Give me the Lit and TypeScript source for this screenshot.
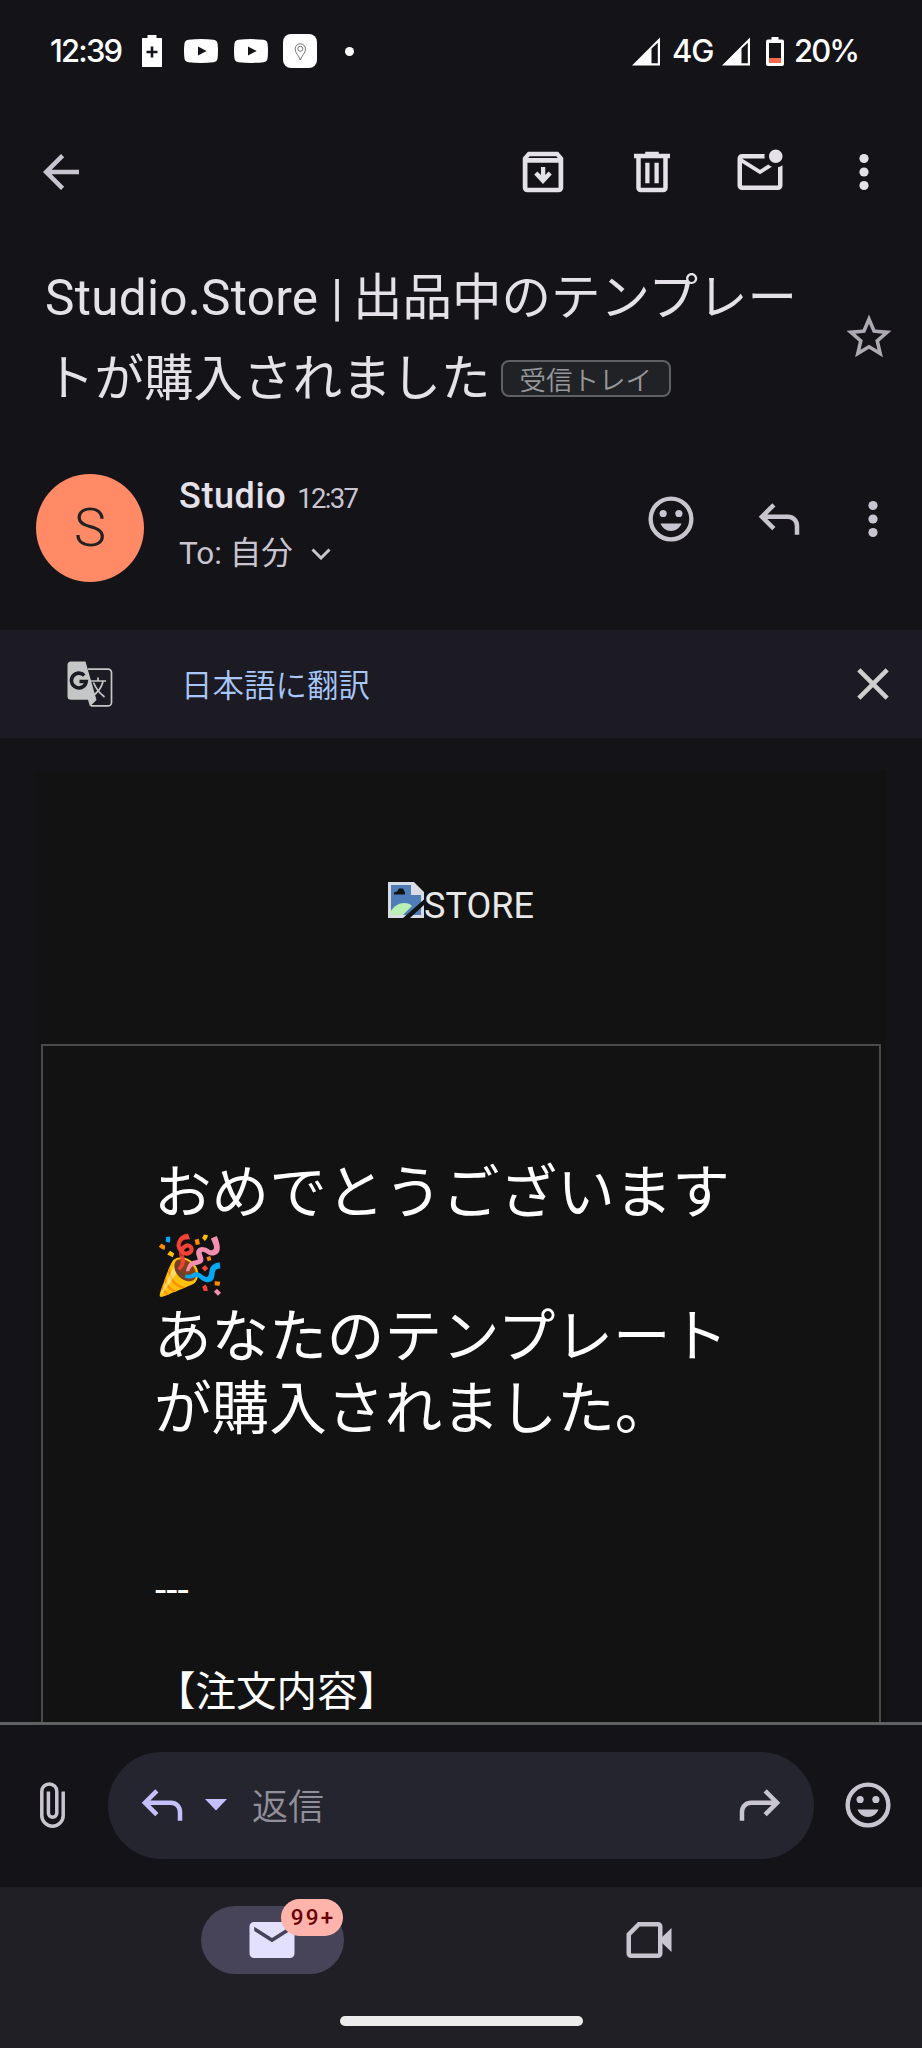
import { LitElement, html, css, svg } from "lit";
import { customElement } from "lit/decorators.js";

const smile = svg`
  <circle cx="12" cy="12" r="9.05" fill="none" stroke="currentColor" stroke-width="1.95"/>
  <circle cx="8.5" cy="9.55" r="1.6"/><circle cx="15.5" cy="9.55" r="1.6"/>
  <path d="M7.3 14h9.4c-.8 2-2.6 3.3-4.7 3.3s-3.9-1.3-4.7-3.3z"/>`;
const dots = svg`<circle cx="12" cy="6" r="2.05"/><circle cx="12" cy="12" r="2.05"/><circle cx="12" cy="18" r="2.05"/>`;
const reply = svg`<path d="M19 19v-4q0-1.25-.875-2.125T16 12H6.825l3.6 3.6L9 17l-6-6 6-6 1.425 1.4-3.6 3.6H16q2.075 0 3.538 1.463T21 15v4z"/>`;

const icon = (body: unknown, cls = "") =>
  html`<svg class="icon ${cls}" viewBox="0 0 24 24" fill="currentColor">${body}</svg>`;

const base = css`
  :host { display: block; box-sizing: border-box; }
  * { box-sizing: border-box; }
  svg { display: block; flex: none; }
  .icon { width: 54px; height: 54px; }
`;

@customElement("status-bar")
class StatusBar extends LitElement {
  static styles = [base, css`
    :host { height: 103px; color: #fff; }
    .row { display: flex; align-items: center; height: 102px; padding: 0 66px 0 50px;
      font: 500 31px/36px Inter, sans-serif; }
    .time { width: 92px; letter-spacing: -1.800px; }
    .yt { margin-left: 22px; }
    .yt + .yt { margin-left: 16px; }
    .pin { margin-left: 15px; }
    .dot { width: 9px; height: 9px; border-radius: 50%; background: #fff; margin-left: 28px; }
    .net { margin-left: auto; display: flex; align-items: center; }
    .g { width: 50px; padding-left: 12px; box-sizing: content-box; letter-spacing: -1px; }
    .bat { margin-left: 16px; }
    .pct { width: 62px; margin-left: 10px; letter-spacing: -1.900px; white-space: nowrap; }
  `];
  yt() {
    return html`<svg class="yt" width="34" height="24" viewBox="0 0 34 24">
      <path fill="#fff" d="M4.5.8Q17-.6 29.5.8 33.2 1.2 33.6 5q.8 7 0 14-.4 3.800-4.100 4.200-12.500 1.400-25 0Q.8 22.800.4 19q-.8-7 0-14Q.8 1.200 4.500.8z"/>
      <path fill="#141318" d="M14 7.400v9.200l8.600-4.600z"/></svg>`;
  }
  signal() {
    return html`<svg width="28" height="29" viewBox="0 0 28 29">
      <path fill="#fff" fill-rule="evenodd" d="M28 .5V28.500H0zM19.500 11.500V26.200H25.800V5.800z"/></svg>`;
  }
  render() {
    return html`<div class="row">
      <span class="time">12:39</span>
      <svg width="20" height="32" viewBox="0 0 20 32"><path fill="#fff" d="M5.500 0h9v3H20v29H0V3h5.500z"/>
        <path stroke="#141318" stroke-width="2.600" d="M10 11.500v11M4.500 17h11"/></svg>
      ${this.yt()}${this.yt()}
      <svg class="pin" width="34" height="34" viewBox="0 0 34 34"><rect width="34" height="34" rx="8" fill="#fff"/>
        <path d="M17.300 26c-1.400-4.500-5.200-7-5.200-11a5.200 5.200 0 0 1 10.400 0c0 4-3.800 6.500-5.200 11z" fill="none" stroke="#666" stroke-width=".9"/>
        <circle cx="17.300" cy="14.800" r="2.500" fill="none" stroke="#666" stroke-width=".9"/></svg>
      <span class="dot"></span>
      <div class="net">
        ${this.signal()}<span class="g">4G</span>${this.signal()}
        <svg class="bat" width="18" height="29" viewBox="0 0 18 29">
          <path fill="#fff" d="M5.500 0h7v2.500H16a2 2 0 0 1 2 2V27a2 2 0 0 1-2 2H2a2 2 0 0 1-2-2V4.500a2 2 0 0 1 2-2h3.500z"/>
          <path fill="#141318" d="M3 6h12v15H3z"/><path fill="#f4694a" d="M3 21h12v5H3z"/></svg>
        <span class="pct">20%</span>
      </div></div>`;
  }
}

@customElement("mail-toolbar")
class MailToolbar extends LitElement {
  static styles = [base, css`
    :host { height: 137px; display: flex; align-items: center; gap: 54.500px; padding: 0 30.700px 0 34px; color: #e5e1e9; }
    .back { margin-right: auto; color: #c9c5d0; }
    .more { margin-left: -4.400px; }
  `];
  render() {
    return html`
      ${icon(svg`<path d="M20 11H7.830l5.590-5.590L12 4l-8 8 8 8 1.410-1.410L7.830 13H20z"/>`, "back")}
      ${icon(svg`<path fill-rule="evenodd" d="M5.300 3h13.400l2.300 2.700V19a2 2 0 0 1-2 2H5a2 2 0 0 1-2-2V5.700zM5.100 7.900V19h13.800V7.900zM6.100 5l-.7.800h13.200l-.7-.8z"/>
        <path d="M11.100 9.800h1.900v3.500l1.500-1.500 1.400 1.300L12 17.300l-3.900-4.200 1.400-1.300 1.600 1.500z"/>`)}
      ${icon(svg`<path fill-rule="evenodd" d="M9 3h6v.9h5v2h-1V19a2 2 0 0 1-2 2H7a2 2 0 0 1-2-2V5.900H4v-2h5zM7 5.900V19h10V5.900z"/>
        <path d="M9 7.900h1.900V17H9zM13.100 7.900H15V17h-1.900z"/>`)}
      ${icon(svg`<path d="M22 8.980V18c0 1.100-.9 2-2 2H4c-1.100 0-2-.9-2-2V6c0-1.100.9-2 2-2h10.100c-.06.320-.1.660-.1 1s.04.680.1 1H4l8 5 3.670-2.290c.47.430 1.020.760 1.630.980L12 13 4 8v10h16V9.900c.74-.15 1.420-.48 2-.92zM16 5c0 1.660 1.340 3 3 3s3-1.340 3-3-1.340-3-3-3-3 1.340-3 3z"/>`)}
      ${icon(dots, "more")}`;
  }
}

@customElement("mail-subject")
class MailSubject extends LitElement {
  static styles = [base, css`
    :host { height: 200px; display: flex; padding: 18px 26.500px 0 45px; color: #e5e1e9; }
    h1 { margin: 0; flex: 1; font: 400 49.500px/81px Roboto, "Noto Sans CJK JP", sans-serif; }
    .brand { letter-spacing: .28px; margin-right: -2.500px; }
    .chip { display: inline-block; vertical-align: 6px; height: 37px; width: 170px; margin-left: 10px; border: 2px solid #5f6064;
      border-radius: 8px; background: #202226; color: #97979c; font: 350 26.500px/34px "Noto Sans CJK JP", sans-serif;
      padding-left: 17px; white-space: nowrap; }
    .star { margin-top: 52px; color: #aeaab4; }
  `];
  render() {
    return html`<h1><span class="brand">Studio.Store |</span> 出品中のテンプレー<br>トが購入されました<span class="chip">受信トレイ</span></h1>
      ${icon(svg`<path d="M22 9.240l-7.190-.62L12 2 9.190 8.630 2 9.240l5.460 4.730L5.820 21 12 17.270 18.180 21l-1.630-7.030L22 9.240zM12 15.400l-3.760 2.270 1-4.280-3.320-2.880 4.380-.38L12 6.100l1.710 4.040 4.380.38-3.320 2.880 1 4.280L12 15.400z"/>`, "star")}`;
  }
}

@customElement("mail-sender")
class MailSender extends LitElement {
  static styles = [base, css`
    :host { height: 190px; display: flex; align-items: flex-start; padding: 34px 22px 0 36px; color: #c9c5d0; }
    .avatar { width: 108px; height: 108px; border-radius: 50%; background: #ff8a65; color: #212121;
      display: flex; align-items: center; justify-content: center; font: 300 54px/1 Roboto, sans-serif; }
    .who { flex: 1; margin: 1px 0 0 35px; font: 400 31.500px/42px Roboto, "Noto Sans CJK JP", sans-serif; }
    .name { display: flex; align-items: baseline; gap: 11px; height: 58px; }
    b { font: 500 36px/42px Roboto, sans-serif; color: #e5e1e9; letter-spacing: .6px; }
    .time { font: 400 27.500px/42px Roboto, sans-serif; letter-spacing: -1.700px; }
    .to { display: flex; align-items: center; height: 42px; }
    .chev { margin-left: 18px; }
    .acts { display: flex; margin-top: 18px; gap: 54px; }
    .acts .more { margin-left: -14px; }
  `];
  render() {
    return html`<div class="avatar">S</div>
      <div class="who"><div class="name"><b>Studio</b><span class="time">12:37</span></div>
        <div class="to"><span>To: 自分</span>
          <svg class="chev" width="20" height="12" viewBox="0 0 20 12"><path d="M1.500 1.500 10 10l8.500-8.500" fill="none" stroke="currentColor" stroke-width="3"/></svg></div></div>
      <div class="acts">${icon(smile)}${icon(reply)}${icon(dots, "more")}</div>`;
  }
}

@customElement("translate-bar")
class TranslateBar extends LitElement {
  static styles = [base, css`
    :host { height: 108px; display: flex; align-items: center; background: #1c1b23; padding: 0 22px 0 67px;
      color: #a8c7fa; font: 350 31.500px/42px "Noto Sans CJK JP", sans-serif; }
    .label { flex: 1; margin-left: 68px; padding-bottom: 2px; }
    .close { color: #cfd0cd; }
  `];
  render() {
    return html`<svg width="46" height="46" viewBox="0 0 46 46">
        <path fill="none" stroke="#c4c7c5" stroke-width="1.700" d="M21 8.200H41a3.500 3.500 0 0 1 3.500 3.500V41.400a3.500 3.500 0 0 1-3.500 3.500H24"/>
        <path fill="none" stroke="#c4c7c5" stroke-width="1.700" d="M23.500 20H39M31 16.500V20M36 20.500C34.500 27 30 32 25.500 35M26.500 21.500C29 28 33 32.500 37.500 36"/>
        <path fill="#c4c7c5" d="M4 .500H18.500L29.500 39 23 45.500 21 38.800H4A3.500 3.500 0 0 1 .5 35.300V4A3.500 3.500 0 0 1 4 .500z"/>
        <path fill="none" stroke="#1c1b23" stroke-width="3.600" d="M17.300 14.500A7.400 7.400 0 1 0 19.200 20.500H12.500"/></svg>
      <span class="label">日本語に翻訳</span>
      ${icon(svg`<path d="M19 6.410 17.590 5 12 10.590 6.410 5 5 6.410 10.590 12 5 17.590 6.410 19 12 13.410 17.590 19 19 17.590 13.410 12z"/>`, "close")}`;
  }
}

@customElement("mail-body")
class MailBody extends LitElement {
  static styles = [base, css`
    :host { height: 984px; padding: 32px 36px 0; overflow: hidden; color: #fff; }
    .page { background: #121212; height: 960px; padding: 0 5px; display: flex; flex-direction: column; }
    .logo { height: 274px; display: flex; justify-content: center; align-items: flex-start; padding-top: 112px;
      font: 400 36px/42px Roboto, sans-serif; color: #e8e8e8; }
    .word { margin-top: 3px; }
    .card { flex: 1; border: 2px solid #4a4a4a; border-bottom: 0; padding: 106px 0 0 112px; }
    h2 { margin: 0 0 0 -1px; width: 600px; font: 400 57.600px/72px "Noto Sans CJK JP", "Noto Color Emoji", sans-serif; }
    p { margin: 0; font: 400 40.500px/51px Roboto, "Noto Sans CJK JP", sans-serif; }
    .rule { margin-top: 125px; }
    .order { margin-top: 51px; }
  `];
  render() {
    return html`<div class="page">
      <div class="logo">
        <svg width="36" height="36" viewBox="0 0 36 36">
          <path fill="#d9dce4" d="M0 0h25l11 11v25H0z"/><path fill="#4f7db8" d="M3 3h20v10h10v20H3z"/>
          <path fill="#b8f0b4" d="M3 33v-4c3-5 8-8 13-8 4 0 6 1 8 3l-9 9z"/>
          <path fill="#121212" d="M6 12.500v-2l3-1 2-3 4 0 2 4v2z"/>
          <path fill="#121212" d="M25 0h11v11zM15 36 36 17.500V23L22 36z"/>
          <path fill="#d9dce4" d="M23 0h3l10 10v3H23zM26 4v6h6z" fill-rule="evenodd"/>
        </svg><span class="word">STORE</span></div>
      <div class="card">
        <h2>おめでとうございます<br>🎉<br>あなたのテンプレート<br>が購入されました。</h2>
        <p class="rule">---</p><p class="order">【注文内容】</p>
      </div></div>`;
  }
}

@customElement("reply-bar")
class ReplyBar extends LitElement {
  static styles = [base, css`
    :host { height: 165px; border-top: 3px solid #5f6165; display: flex; align-items: center; padding: 0 27px 2px 40px; color: #c9c5d0; }
    .pill { margin: 0 27px 0 43px; flex: 1; height: 107px; border-radius: 54px; background: #25252f;
      display: flex; align-items: center; padding: 0 27px; color: #918f9a; font: 350 36px/48px "Noto Sans CJK JP", sans-serif; }
    .rep { color: #c4c0ff; }
    .tri { margin: 0 25px 0 16px; }
    .label { flex: 1; padding-bottom: 2px; }
    .fwd { color: #c9c5d0; transform: scaleX(-1); }
  `];
  render() {
    return html`<svg width="25" height="46" viewBox="0 0 25 46"><path fill="none" stroke="currentColor" stroke-width="3.500"
        d="M23.200 9.500V33.500A10.700 10.700 0 0 1 1.800 33.500V9.400A7.500 7.500 0 0 1 16.800 9.400V31a4.200 4.200 0 0 1-8.400 0V9.500"/></svg>
      <div class="pill">${icon(reply, "rep")}
        <svg class="tri" width="22" height="12" viewBox="0 0 22 12"><path fill="#c4c0ff" d="M0 0h22L11 11.500z"/></svg>
        <span class="label">返信</span>${icon(reply, "fwd")}</div>
      ${icon(smile)}`;
  }
}

@customElement("bottom-nav")
class BottomNav extends LitElement {
  static styles = [base, css`
    :host { height: 161px; background: #201f25; display: flex; flex-direction: column; align-items: center; padding-top: 19px; }
    .tabs { display: flex; width: 100%; padding-left: 201px; }
    .tab { width: 143px; height: 68px; display: flex; align-items: center; justify-content: center; }
    .on { position: relative; background: #474459; border-radius: 34px; color: #e3dfff; padding-right: 1px; }
    .off { margin-left: 233px; color: #c9c5d0; }
    .badge { position: absolute; left: 80px; top: -7px; width: 62px; height: 37px; border-radius: 19px; background: #ffb4ab;
      color: #690005; font: 500 22.500px/37px Roboto, sans-serif; letter-spacing: 2.200px; text-align: center; padding-left: 2px; }
    .handle { width: 243px; height: 10px; border-radius: 5px; background: #ececec; margin-top: 42px; }
  `];
  render() {
    return html`<div class="tabs">
        <div class="tab on">${icon(svg`<path fill-rule="evenodd" d="M4 4h16a2 2 0 0 1 2 2v12a2 2 0 0 1-2 2H4a2 2 0 0 1-2-2V6a2 2 0 0 1 2-2zM4.100 6.100V8L12 13l7.900-5V6.100L12 11.100z"/>`)}
          <span class="badge">99+</span></div>
        <div class="tab off">${icon(svg`<path fill="none" stroke="currentColor" stroke-width="2" d="M7.500 5H16a1 1 0 0 1 1 1v12a1 1 0 0 1-1 1H4a1 1 0 0 1-1-1V9.500z"/><path d="M22 6.700v10.600l-4.500-4.300v-2z"/>`)}</div>
      </div><div class="handle"></div>`;
  }
}

@customElement("app-root")
class AppRoot extends LitElement {
  static styles = css`:host { display: block; width: 922px; height: 2048px; overflow: hidden; background: #141318; }`;
  render() {
    return html`<status-bar></status-bar><mail-toolbar></mail-toolbar><mail-subject></mail-subject>
      <mail-sender></mail-sender><translate-bar></translate-bar><mail-body></mail-body>
      <reply-bar></reply-bar><bottom-nav></bottom-nav>`;
  }
}
